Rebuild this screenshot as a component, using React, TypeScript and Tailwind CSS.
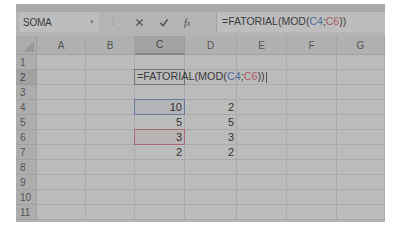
import React from "react";

const cols = ["A", "B", "C", "D", "E", "F", "G"];
const widths = [49, 49, 50, 52, 50, 50, 48];

const values: Record<string, string> = {
  C4: "10",
  C5: "5",
  C6: "3",
  C7: "2",
  D4: "2",
  D5: "5",
  D6: "3",
  D7: "2",
};

function Formula() {
  return (
    <>
      <span>=FATORIAL(MOD(</span>
      <span className="text-[#4d6c9e]">C4</span>
      <span>;</span>
      <span className="text-[#a85a62]">C6</span>
      <span>))</span>
    </>
  );
}

export default function App() {
  const rows = Array.from({ length: 11 }, (_, i) => i + 1);

  return (
    <div
      className="w-[398px] h-[247px] bg-white pt-[4px] pl-[16px]"
      style={{ fontFamily: "'Liberation Sans', Arial, sans-serif" }}
    >
      <div className="w-[369px] h-[218px] bg-[#b4b4b4] flex flex-col overflow-hidden">
        {/* top band */}
        <div className="h-[8px] bg-[#a9a9a9]" />

        {/* name box + formula bar */}
        <div className="h-[20px] flex items-stretch text-[10px] text-[#3c3c3c]">
          <div className="ml-[3px] w-[80px] bg-[#bdbdbd] flex items-center justify-between pl-[4px] pr-[5px]">
            <span className="tracking-tight">SOMA</span>
            <span className="text-[7px] text-[#777]">▾</span>
          </div>
          <div className="w-[26px] flex items-center justify-center text-[#8c8c8c] text-[9px] leading-none">
            ⋮
          </div>
          <div className="w-[92px] flex items-center gap-[15px] pl-[10px] border-r border-[#a2a2a2]">
            <svg width="9" height="9" viewBox="0 0 10 10">
              <path d="M1.5 1.5 L8.5 8.5 M8.5 1.5 L1.5 8.5" stroke="#4a4a4a" strokeWidth="1.4" />
            </svg>
            <svg width="10" height="9" viewBox="0 0 10 10">
              <path d="M1 5.5 L4 8.5 L9 1.5" stroke="#4a4a4a" strokeWidth="1.5" fill="none" />
            </svg>
            <span className="italic text-[10px] text-[#4a4a4a]" style={{ fontFamily: "'Liberation Serif', serif" }}>
              f<span className="text-[8px]">x</span>
            </span>
          </div>
          <div className="flex-1 bg-[#bdbdbd] flex items-center pl-[5px] text-[10.5px] whitespace-nowrap">
            <Formula />
          </div>
        </div>

        <div className="h-[4px]" />

        {/* grid */}
        <div
          className="grid text-[10.5px] text-[#3a3a3a]"
          style={{ gridTemplateColumns: `21px ${widths.map((w) => w + "px").join(" ")}` }}
        >
          {/* header row */}
          <div className="h-[19px] bg-[#acacac] border-r border-b border-[#9f9f9f] flex items-end justify-end p-[2px]">
            <svg width="11" height="11" viewBox="0 0 11 11">
              <path d="M11 0 L11 11 L0 11 Z" fill="#989898" />
            </svg>
          </div>
          {cols.map((c) => (
            <div
              key={c}
              className={`h-[19px] flex items-center justify-center border-r border-b text-[10px] ${
                c === "C"
                  ? "bg-[#a2a2a2] border-b-[#7f8a82] border-b-2 border-r-[#9f9f9f] text-[#444]"
                  : "bg-[#b0b0b0] border-[#a3a3a3] text-[#555]"
              }`}
            >
              {c}
            </div>
          ))}

          {rows.map((r) => (
            <React.Fragment key={r}>
              <div
                className={`h-[15px] flex items-center pl-[4px] text-[10px] border-b border-r ${
                  r === 2
                    ? "bg-[#a2a2a2] border-[#9a9a9a] text-[#444]"
                    : "bg-[#adadad] border-[#a2a2a2] text-[#555]"
                }`}
              >
                {r}
              </div>
              {cols.map((c) => {
                const id = `${c}${r}`;
                const v = values[id];
                return (
                  <div
                    key={id}
                    className="relative h-[15px] bg-[#bbbbbb] border-b border-r border-[#aaaaaa] flex items-center justify-end pr-[2px] leading-none"
                  >
                    {v && <span className="relative z-20 text-[11px] font-medium text-[#333]">{v}</span>}
                    {id === "C2" && (
                      <>
                        <div className="absolute -left-[1px] -top-[1px] w-[51px] h-[16px] border-[1.5px] border-[#6f7873] z-10" />
                        <span className="absolute left-[2px] top-[1px] z-20 whitespace-nowrap text-[10.8px] text-[#3a3a3a]">
                          <Formula />
                          <span className="inline-block w-[1px] h-[11px] bg-[#555] align-middle ml-[1px]" />
                        </span>
                      </>
                    )}
                    {id === "C4" && (
                      <div className="absolute -left-[1px] -top-[1px] w-[51px] h-[16px] border-[1.5px] border-[#6a7aa0] bg-[#6a7aa0]/10" />
                    )}
                    {id === "C6" && (
                      <div className="absolute -left-[1px] -top-[1px] w-[51px] h-[16px] border-[1.5px] border-[#a86d72] bg-[#a86d72]/10" />
                    )}
                  </div>
                );
              })}
            </React.Fragment>
          ))}
        </div>
      </div>
    </div>
  );
}
